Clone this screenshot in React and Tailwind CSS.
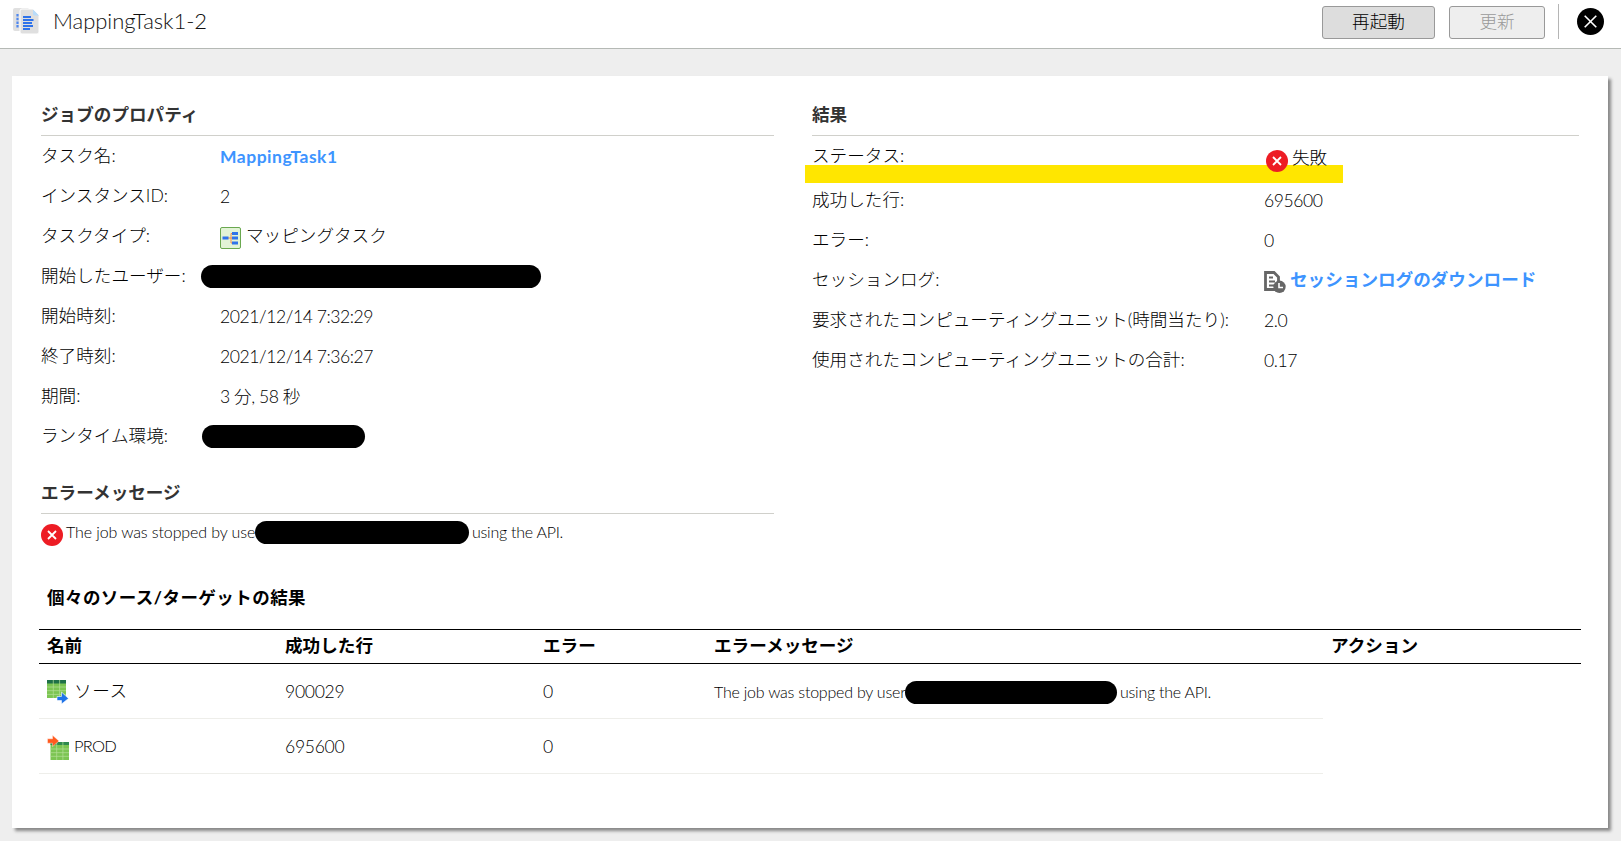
import React from 'react';

const ErrorIcon = () => (
  <svg width="22" height="22" viewBox="0 0 22 22" className="shrink-0">
    <circle cx="11" cy="11" r="11" fill="#ed1c24" />
    <path d="M7 7l8 8M15 7l-8 8" stroke="#fff" strokeWidth="1.8" />
  </svg>
);

const TaskIcon = () => (
  <svg width="28" height="28" viewBox="0 0 28 28" className="shrink-0">
    <path d="M3 1h13l3 3v20H3a2 2 0 0 1-2-2V3a2 2 0 0 1 2-2z" fill="#e0e0e0" />
    <path d="M5.500 7v14" stroke="#4d86ef" strokeWidth="2.200" strokeDasharray="2.500 1.200" />
    <path d="M10 2h11l6 6v17a2 2 0 0 1-2 2H10a2 2 0 0 1-2-2V4a2 2 0 0 1 2-2z" fill="#dfdfdf" stroke="#fff" />
    <path d="M21 2.500l6 6h-4.500a1.500 1.500 0 0 1-1.500-1.500z" fill="#b9dcfa" />
    <path d="M11 10h8M11 13h10.500M11 16h9M11 19h10M11 22h7" stroke="#2f73ea" strokeWidth="2" />
  </svg>
);

const MappingIcon = () => (
  <svg width="22" height="22" viewBox="0 0 22 22" className="shrink-0">
    <rect x=".5" y=".5" width="20" height="21" rx="1.500" fill="#e2f3d6" stroke="#6aa84f" />
    <path d="M8 11h3M14 6.500h-3v9.500h3M11 11h3" stroke="#f08c4a" fill="none" />
    <path d="M2.500 11h6M12 6.500h6M12 11h6M12 16h6" stroke="#2f73ea" strokeWidth="2.800" />
  </svg>
);

const LogIcon = () => (
  <svg width="22" height="22" viewBox="0 0 22 22" className="shrink-0">
    <path d="M1.500 1.500h8.500l4.500 4.500v12.500h-13z" fill="#fff" stroke="#666" strokeWidth="2.800" />
    <path d="M5 6.500h4M5 10.500h6M5 14.500h5" stroke="#666" strokeWidth="2" />
    <circle cx="15.500" cy="15.800" r="6.200" fill="#666" />
    <path d="M15 12v4.500h4" stroke="#fff" strokeWidth="1.600" fill="none" />
  </svg>
);

const SourceIcon = () => (
  <svg width="22" height="24" viewBox="0 0 22 24" className="shrink-0">
    <rect width="19" height="18" fill="#7cc552" />
    <rect width="19" height="3.500" fill="#1f7048" />
    <path d="M6.300 0v18M12.600 0v18M0 7h19M0 10.700h19M0 14.400h19" stroke="#b5df98" strokeWidth=".7" />
    <path d="M10 16.500h4.500v-4.500l7 6.500-7 5.500v-3.500h-4.500z" fill="#1f73e8" stroke="#fff" strokeWidth=".6" />
  </svg>
);

const TargetIcon = () => (
  <svg width="22" height="25" viewBox="0 0 22 25" className="shrink-0">
    <rect x="3.500" y="7" width="18.500" height="18" fill="#7cc552" />
    <rect x="3.500" y="7" width="18.500" height="3" fill="#2f8a4f" />
    <path d="M9.700 7v18M15.900 7v18M3.500 14h18.500M3.500 17.700h18.500M3.500 21.300h18.500" stroke="#b5df98" strokeWidth=".7" />
    <path d="M.5 3.800h5v-3.500l6.500 5.700-6.500 5.700v-3.500h-5z" fill="#ff5a1f" stroke="#fff" strokeWidth=".4" />
  </svg>
);

const CloseIcon = () => (
  <svg width="27" height="27" viewBox="0 0 27 27">
    <circle cx="13.500" cy="13.500" r="13.500" fill="#000" />
    <path d="M7.700 7.700l11.600 11.600M19.300 7.700l-11.600 11.600" stroke="#fff" strokeWidth="1.600" />
  </svg>
);

const jobProperties = [
  { label: 'タスク名:', value: <a className="text-[17.5px] font-bold tracking-[0.5px] text-[#3d94ff]">MappingTask1</a> },
  { label: 'インスタンスID:', value: '2' },
  { label: 'タスクタイプ:', icon: <MappingIcon />, value: 'マッピングタスク' },
  { label: '開始したユーザー:', redacted: 'ml-[-19px] w-[340px]' },
  { label: '開始時刻:', value: '2021/12/14 7:32:29' },
  { label: '終了時刻:', value: '2021/12/14 7:36:27' },
  { label: '期間:', value: '3 分, 58 秒' },
  { label: 'ランタイム環境:', redacted: 'ml-[-18px] w-[163px]' },
];

const results = [
  { label: '成功した行:', value: '695600' },
  { label: 'エラー:', value: '0' },
  {
    label: 'セッションログ:',
    icon: <LogIcon />,
    value: <a className="font-bold text-[#3d94ff]">セッションログのダウンロード</a>,
  },
  { label: '要求されたコンピューティングユニット(時間当たり):', value: '2.0' },
  { label: '使用されたコンピューティングユニットの合計:', value: '0.17' },
];

const Redacted = ({ className }) => (
  <span className={`inline-block h-[23px] shrink-0 rounded-full bg-black ${className}`} />
);

const SectionTitle = ({ children }) => (
  <h2 className="h-[35px] border-b border-[#d0d0cb] text-[17.6px] leading-[27px] font-bold text-[#333]">
    {children}
  </h2>
);

const PropertyRow = ({ label, icon, value, redacted, labelWidth }) => (
  <div className="flex h-10 items-start">
    <dt className={`shrink-0 leading-[39px] ${labelWidth}`}>{label}</dt>
    <dd className="flex h-10 items-center gap-1">
      {redacted && <Redacted className={redacted} />}
      {icon && <span className="pt-1">{icon}</span>}
      {value && (
        <span className={icon ? 'pt-px' : 'pt-0.5 tracking-[-0.45px]'}>{value}</span>
      )}
    </dd>
  </div>
);

const App = () => {
  return (
    <div className="flex h-[841px] w-[1621px] flex-col overflow-hidden bg-[#eee] font-['Lato','Noto_Sans_CJK_JP',sans-serif] text-[17.6px] font-light whitespace-nowrap text-black">
      {/* Header */}
      <header className="flex h-[49px] shrink-0 items-start justify-between border-b border-[#b5b9b5] bg-white pr-[17px] pl-3">
        <div className="flex items-center pt-[7px]">
          <TaskIcon />
          <h1 className="ml-[13px] text-[22px] leading-7 tracking-[-0.05px] text-[#111]">MappingTask1-2</h1>
        </div>
        <div className="flex items-start">
          <button className="mt-1.5 h-[33px] w-[113px] rounded-[3px] border border-[#999] bg-[#ddd] pb-0.5 leading-[27px]">再起動</button>
          <button className="mt-1.5 ml-3.5 h-[33px] w-24 rounded-[3px] border border-[#999] bg-[#eee] pb-0.5 leading-[27px] text-[#999]">更新</button>
          <div className="mt-1 ml-[13px] h-[35px] w-px bg-[#b5b5b5]" />
          <button className="mt-2 ml-[18px]"><CloseIcon /></button>
        </div>
      </header>

      <main className="mt-[27px] ml-3 h-[752px] w-[1596px] bg-white pt-[25px] pl-[27px] shadow-[3px_3px_3px_#888]">
        <div className="flex h-[483px] pl-0.5">
          <div className="w-[733px]">
            <SectionTitle>ジョブのプロパティ</SectionTitle>
            <dl>
              {jobProperties.map((row) => (
                <PropertyRow key={row.label} labelWidth="w-[179px]" {...row} />
              ))}
            </dl>

            <div className="mt-[23px]">
              <SectionTitle>エラーメッセージ</SectionTitle>
              <div className="flex h-[37px] items-center text-base">
                <span className="pt-1"><ErrorIcon /></span>
                <span className="ml-[3px] w-[190px] pb-0.5 tracking-[-0.1px]">The job was stopped by use</span>
                <Redacted className="-ml-px w-[214px]" />
                <span className="ml-[3px] pb-0.5 tracking-[-0.25px]">using the API.</span>
              </div>
            </div>
          </div>

          <div className="ml-[38px] w-[767px]">
            <SectionTitle>結果</SectionTitle>
            <dl>
              <div className="relative flex h-11">
                <div className="absolute top-[29px] -left-[7px] h-[18px] w-[538px] bg-[#ffe600]" />
                <dt className="relative w-[454px] leading-[40px]">ステータス:</dt>
                <dd className="relative flex gap-1 leading-[43px]">
                  <span className="pt-[14px]"><ErrorIcon /></span>
                  失敗
                </dd>
              </div>
              {results.map((row) => (
                <PropertyRow key={row.label} labelWidth="w-[452px]" {...row} />
              ))}
            </dl>
          </div>
        </div>

        {/* Source / target results */}
        <section className="w-[1542px]">
          <h2 className="h-[45px] pt-px pl-2 text-[17.5px] leading-[26px] font-bold tracking-[0.45px]">個々のソース/ターゲットの結果</h2>
          <div className="grid h-[35px] grid-cols-[238px_258px_171px_617px_1fr] border-y border-black pl-2 leading-[32px] font-bold">
            <span>名前</span>
            <span>成功した行</span>
            <span>エラー</span>
            <span>エラーメッセージ</span>
            <span>アクション</span>
          </div>
          <div className="grid h-[55px] w-[1284px] grid-cols-[238px_258px_171px_1fr] items-center border-b border-[#eeeeea] pl-2">
            <span className="flex items-center gap-[5px] pt-0.5">
              <SourceIcon />
              <span className="pb-0.5 tracking-[0.6px]">ソース</span>
            </span>
            <span className="pt-0.5 tracking-[-0.3px]">900029</span>
            <span className="pt-0.5">0</span>
            <span className="flex items-center pt-0.5 text-base">
              <span className="w-[191px] tracking-[-0.22px]">The job was stopped by user</span>
              <Redacted className="w-[212px]" />
              <span className="ml-[3px] tracking-[-0.25px]">using the API.</span>
            </span>
          </div>
          <div className="grid h-[55px] w-[1284px] grid-cols-[238px_258px_171px_1fr] items-center border-b border-[#eeeeea] pl-2">
            <span className="flex items-center gap-[5px] pt-0.5">
              <TargetIcon />
              <span className="pb-0.5 text-[16.5px] tracking-[-0.8px]">PROD</span>
            </span>
            <span className="pt-0.5 tracking-[-0.3px]">695600</span>
            <span className="pt-0.5">0</span>
          </div>
        </section>
      </main>
    </div>
  );
};

export default App;
